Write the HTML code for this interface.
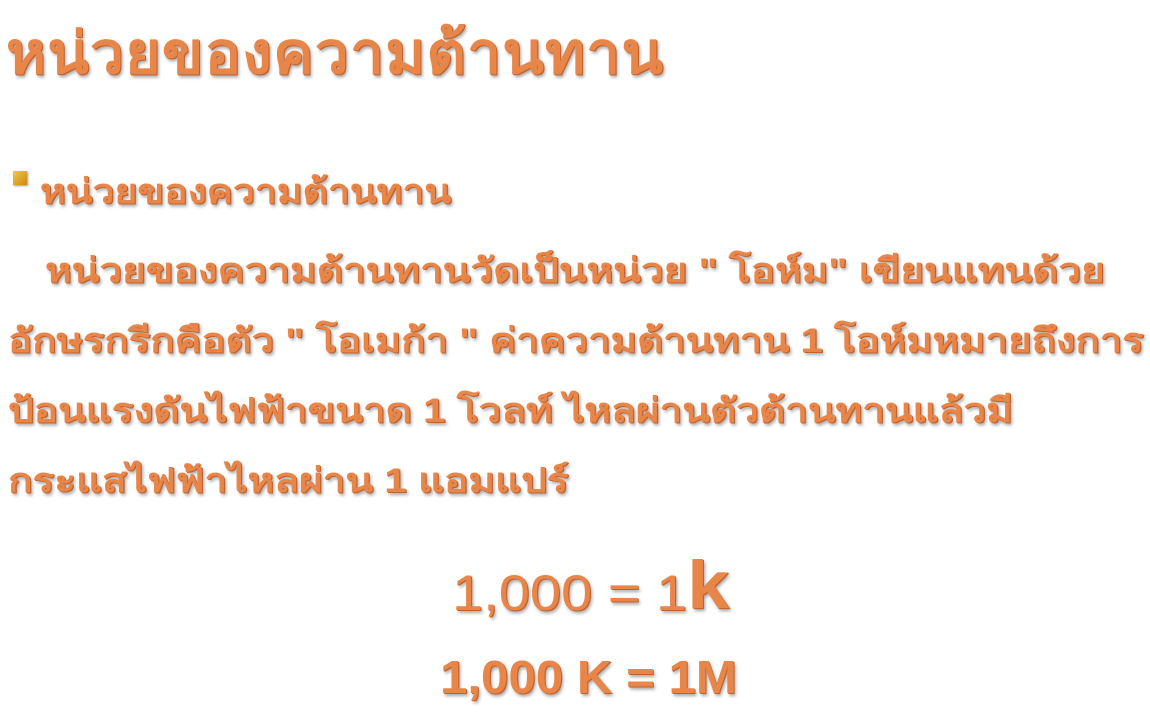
<!DOCTYPE html>
<html><head><meta charset="utf-8"><style>
body{margin:0;width:1150px;height:713px;background:#fff;overflow:hidden;position:relative;font-family:"Liberation Sans",sans-serif;}
.t{position:absolute;color:#e8864a;text-shadow:1px 1px 0 #c0622c,2px 3px 3px rgba(0,0,0,0.35);white-space:nowrap;transform-origin:0 50%;}
.p{position:absolute;left:8px;color:#e8864a;text-shadow:1px 1px 0 #c0622c,2px 3px 3px rgba(0,0,0,0.35);white-space:nowrap;font-size:34px;font-weight:bold;transform:scaleX(1.19);transform-origin:0 50%;}
</style></head><body>
<div class="t" style="left:6px;top:6px;font-size:58px;font-weight:bold;letter-spacing:1px;transform:scaleX(1.05);">หน่วยของความต้านทาน</div>
<div style="position:absolute;left:13px;top:171px;width:14px;height:14px;background:linear-gradient(135deg,#f2c84a,#c98a10);box-shadow:1px 1px 2px rgba(0,0,0,.4)"></div>
<div class="t" style="left:40px;top:164px;font-size:34px;font-weight:bold;transform:scaleX(1.15);">หน่วยของความต้านทาน</div>
<div class="p" style="top:243px;left:45px;">หน่วยของความต้านทานวัดเป็นหน่วย " โอห์ม" เขียนแทนด้วย</div>
<div class="p" style="top:313px;transform:scaleX(1.18);">อักษรกรีกคือตัว " โอเมก้า " ค่าความต้านทาน 1 โอห์มหมายถึงการ</div>
<div class="p" style="top:383px;">ป้อนแรงดันไฟฟ้าขนาด 1 โวลท์ ไหลผ่านตัวต้านทานแล้วมี</div>
<div class="p" style="top:453px;">กระแสไฟฟ้าไหลผ่าน 1 แอมแปร์</div>
<div class="t" style="left:452px;top:548px;font-size:50px;transform:scaleX(1.12);">1,000 = 1<span style="font-size:68px;font-weight:bold;position:relative;top:-2px">k</span></div>
<div class="t" style="left:440px;top:650px;font-size:46px;font-weight:bold;transform:scaleX(1.07);">1,000 K = 1M</div>
</body></html>
